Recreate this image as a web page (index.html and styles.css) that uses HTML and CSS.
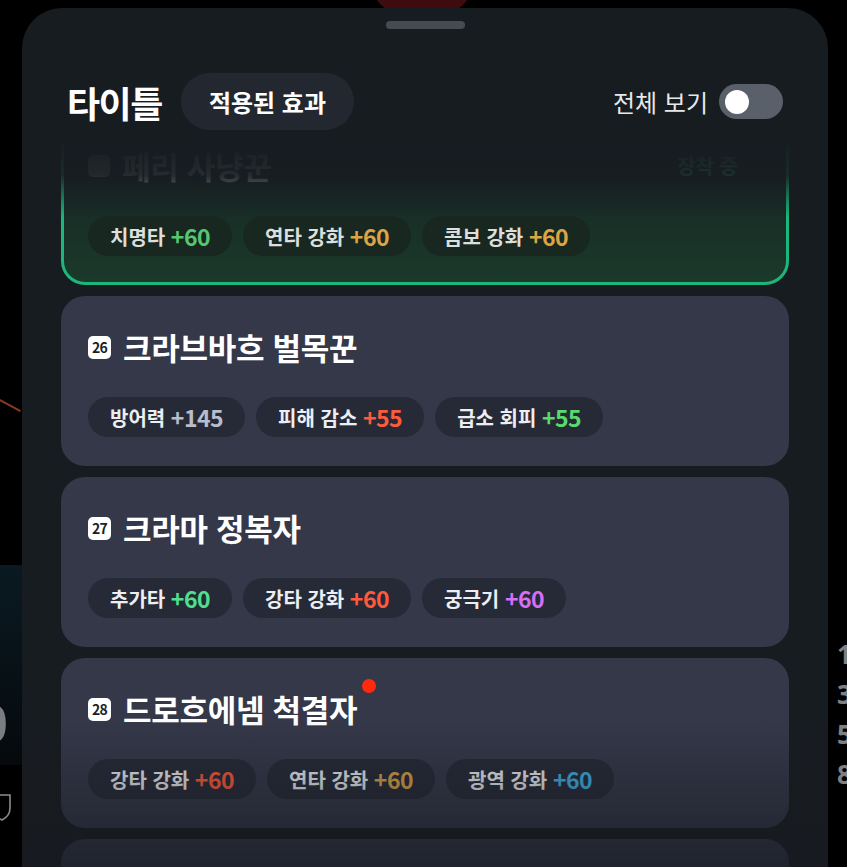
FILE: index.html
```html
<!DOCTYPE html>
<html lang="ko">
<head>
  <meta charset="UTF-8">
  <meta name="viewport" content="width=device-width, initial-scale=1.0">
  <title>타이틀</title>
  <link rel="stylesheet" href="styles.css">
</head>
<body>

<!-- game scene behind the sheet -->
<div class="backdrop">
  <div class="bg-blob"></div>
  <div class="bg-streak"></div>
  <div class="bg-panel"></div>
  <span class="bg-zero">0</span>
  <svg class="bg-shield" width="14" height="30" viewBox="0 0 14 30"><path d="M-6 3 L10 3 L10 16 Q10 24 2 28 Q-6 24 -6 16 Z" fill="none" stroke="#8a8d92" stroke-width="1.6"/></svg>
  <div class="bg-digits"><span>1</span><span>3</span><span>5</span><span>8</span></div>
</div>

<div class="sheet">
  <div class="handle"></div>

  <div class="sheet-header">
    <div class="header-left">
      <h1 class="sheet-title">타이틀</h1>
      <button class="effect-pill">적용된 효과</button>
    </div>
    <div class="view-all">
      <span>전체 보기</span>
      <span class="toggle"><span class="knob"></span></span>
    </div>
  </div>

  <div class="title-list">
    <div class="card equipped">
      <div class="card-title">
        <span class="badge ghost"></span>
        <span class="name">페리 사냥꾼</span>
        <span class="equip-tag">장착 중</span>
      </div>
      <div class="chips">
        <span class="chip">치명타 <b class="v-green">+60</b></span>
        <span class="chip">연타 강화 <b class="v-gold">+60</b></span>
        <span class="chip">콤보 강화 <b class="v-gold">+60</b></span>
      </div>
    </div>

    <div class="card">
      <div class="card-title">
        <span class="badge">26</span>
        <span class="name">크라브바흐 벌목꾼</span>
      </div>
      <div class="chips">
        <span class="chip">방어력 <b class="v-grey">+145</b></span>
        <span class="chip">피해 감소 <b class="v-red">+55</b></span>
        <span class="chip">급소 회피 <b class="v-lime">+55</b></span>
      </div>
    </div>

    <div class="card">
      <div class="card-title">
        <span class="badge">27</span>
        <span class="name">크라마 정복자</span>
      </div>
      <div class="chips">
        <span class="chip">추가타 <b class="v-mint">+60</b></span>
        <span class="chip">강타 강화 <b class="v-red">+60</b></span>
        <span class="chip">궁극기 <b class="v-purple">+60</b></span>
      </div>
    </div>

    <div class="card">
      <div class="card-title">
        <span class="badge">28</span>
        <span class="name">드로흐에넴 척결자<span class="new-dot"></span></span>
      </div>
      <div class="chips">
        <span class="chip">강타 강화 <b class="v-red">+60</b></span>
        <span class="chip">연타 강화 <b class="v-gold">+60</b></span>
        <span class="chip">광역 강화 <b class="v-blue">+60</b></span>
      </div>
    </div>

    <div class="card">
      <div class="card-title">
        <span class="badge">29</span>
        <span class="name">베르단 수호자</span>
      </div>
      <div class="chips">
        <span class="chip">방어력 <b class="v-grey">+120</b></span>
      </div>
    </div>
  </div>
</div>

</body>
</html>
```

FILE: styles.css
```css
body { margin: 0; background: #000; font-family: "Noto Sans CJK KR", "Noto Sans", sans-serif; height: 867px; overflow: hidden; position: relative; }

/* backdrop */
.backdrop { position: absolute; inset: 0; overflow: hidden; }
.bg-blob { position: absolute; left: 372px; top: -50px; width: 100px; height: 70px; border-radius: 50%; background: #3e0b0e; }
.bg-streak { position: absolute; left: -4px; top: 404px; width: 26px; height: 2px; background: #8a3a20; transform: rotate(28deg); }
.bg-panel { position: absolute; left: 0; top: 565px; width: 22px; height: 200px; background: linear-gradient(180deg, #0a1a22, #05090c); }
.bg-zero { position: absolute; left: -22px; top: 686px; font: 700 52px "Noto Sans", sans-serif; color: #7a7d82; }
.bg-shield { position: absolute; left: 0; top: 792px; }
.bg-digits { position: absolute; left: 837px; top: 634px; display: flex; flex-direction: column; font: 700 26px/40px "Noto Sans", sans-serif; color: #7e8084; }

/* sheet */
.sheet { position: relative; margin: 8px 19px 0 22px; height: 859px; background: #171c21; border-radius: 40px 40px 0 0; overflow: hidden; display: flex; flex-direction: column; }
.handle { width: 79px; height: 8px; border-radius: 4px; background: #464b53; margin: 13px auto 0; flex: none; }

.sheet-header { display: flex; align-items: center; justify-content: space-between; height: 57px; margin: 44px 0 10px; padding: 0 45px; flex: none; position: relative; z-index: 2; }
.header-left { display: flex; align-items: center; gap: 19px; }
.sheet-title { margin: 0; font-size: 36px; font-weight: 700; line-height: 40px; color: #fff; letter-spacing: -1.5px; }
.effect-pill { height: 57px; padding: 0 28px; border: none; border-radius: 29px; background: #232830; color: #fff; font-family: inherit; font-size: 24px; font-weight: 700; }
.view-all { display: flex; align-items: center; gap: 11px; color: #e6e8eb; font-size: 24px; }
.toggle { width: 64px; height: 35px; border-radius: 18px; background: #59606a; display: flex; align-items: center; padding-left: 6px; box-sizing: border-box; }
.knob { width: 24px; height: 24px; border-radius: 50%; background: #fff; }

/* list */
.title-list { position: relative; flex: 1; overflow: hidden; padding: 0 39px; display: flex; flex-direction: column; gap: 11px; }
.title-list::before { content: ""; position: absolute; left: 0; right: 0; top: 0; height: 80px; z-index: 1; background: linear-gradient(180deg, #171c21 0, rgba(23,28,33,.9) 35px, rgba(23,28,33,.3) 62px, rgba(23,28,33,0) 78px); }
.title-list::after { content: ""; position: absolute; left: 0; right: 0; bottom: 0; height: 150px; z-index: 1; background: linear-gradient(180deg, rgba(23,26,32,0) 0, rgba(23,26,32,.5) 75%, rgba(23,26,32,.68) 100%); }

.card { flex: none; height: 170px; box-sizing: border-box; padding: 34px 27px 0; border-radius: 24px; background: #343849; }
.card.equipped { margin-top: -25px; padding: 31px 24px 0; border: 3px solid #1bb77b; background: linear-gradient(180deg, #161d20 0%, #1a3a2b 100%); }

.card-title { display: flex; align-items: center; height: 34px; font-size: 31px; font-weight: 700; line-height: 34px; color: #fff; letter-spacing: -0.3px; }
.badge { width: 23px; height: 23px; margin-right: 12px; border-radius: 5px; background: #fff; color: #1b1e27; font-size: 14px; font-weight: 700; line-height: 23px; text-align: center; letter-spacing: -0.8px; }
.badge.ghost { background: #8c9196; width: 22px; height: 22px; }
.name { position: relative; }
.equipped .name { color: #a9aeb1; }
.equip-tag { margin-left: auto; margin-right: 24px; font-size: 20px; color: #3fd092; letter-spacing: 0; }
.new-dot { position: absolute; right: -19px; top: -13px; width: 14px; height: 14px; border-radius: 50%; background: #ff2a0c; }

.chips { display: flex; gap: 11px; margin-top: 33px; }
.chip { height: 40px; padding: 0 22px; border-radius: 20px; background: #262a37; display: flex; align-items: center; font-size: 20px; font-weight: 700; color: #eceef2; white-space: pre; }
.equipped .chip { background: #182821; color: #dcdfdc; }
.chip b { font-weight: 700; font-size: 23px; letter-spacing: -0.5px; }

.v-green { color: #55c76f; }
.v-gold { color: #dca544; }
.v-grey { color: #b8bdc9; }
.v-red { color: #ff5a3b; }
.v-lime { color: #58db6c; }
.v-mint { color: #4fe08e; }
.v-purple { color: #d56ff6; }
.v-blue { color: #3fb3e6; }
```
